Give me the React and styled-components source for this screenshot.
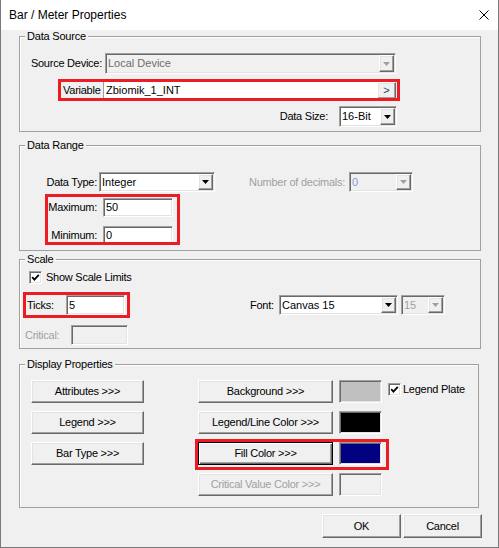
import React from 'react';
import styled, { createGlobalStyle, css } from 'styled-components';

const GlobalStyle = createGlobalStyle`
  * { box-sizing: border-box; }
  html, body { margin: 0; padding: 0; background: #f0f0f0; }
  body {
    font-family: "Liberation Sans", Arial, sans-serif;
    font-size: 11px;
    line-height: 13px;
    color: #000;
  }
`;

const sunken = css`
  border: 1px solid;
  border-color: #a0a0a0 #fff #fff #a0a0a0;
  box-shadow: inset 1px 1px 0 #696969, inset -1px -1px 0 #e3e3e3;
`;

const raised = css`
  border: 1px solid;
  border-color: #fff #696969 #696969 #fff;
  box-shadow: inset -1px -1px 0 #a0a0a0, inset 1px 1px 0 #e3e3e3;
`;

const Window = styled.div`
  width: 499px;
  height: 548px;
  display: flex;
  flex-direction: column;
  background: #f0f0f0;
  border: 1px solid #7a7a7a;
  border-top: none;
  overflow: hidden;
`;

const TitleBar = styled.div`
  height: 30px;
  flex-shrink: 0;
  display: flex;
  align-items: center;
  justify-content: space-between;
  padding: 0 9px 0 8px;
  background: #fff;
  font-size: 12px;
`;

const Body = styled.div`
  display: flex;
  flex-direction: column;
  align-items: flex-start;
  padding-left: 18px;
`;

const Group = styled.fieldset`
  display: block;
  margin: ${p => p.$top || 0}px 0 0;
  padding: 0;
  min-width: 0;
  width: ${p => p.$w}px;
  height: ${p => p.$h}px;
  border: 1px solid #a0a0a0;
  box-shadow: inset 1px 1px 0 #fff;
`;

const GroupTitle = styled.legend`
  margin-left: 5px;
  padding: 0 2px;
  line-height: 13px;
  background: #f0f0f0;
  letter-spacing: -0.2px;
`;

const Row = styled.div`
  display: flex;
  align-items: ${p => p.$top ? 'flex-start' : 'center'};
  justify-content: ${p => p.$end ? 'flex-end' : 'flex-start'};
  gap: ${p => p.$gap || 0}px;
  margin: ${p => p.$mt || 0}px ${p => p.$mr || 0}px 0 ${p => p.$ml || 0}px;
`;

const Column = styled.div`
  display: flex;
  flex-direction: column;
  align-items: flex-start;
  gap: ${p => p.$gap || 0}px;
`;

const Highlight = styled.div`
  position: relative;
  width: max-content;
  display: flex;
  flex-direction: ${p => p.$col ? 'column' : 'row'};
  align-items: ${p => p.$col ? 'flex-start' : 'center'};
  gap: ${p => p.$gap || 0}px;
  margin: ${p => p.$mt || 0}px 0 0 ${p => p.$ml || 0}px;

  &::after {
    content: '';
    position: absolute;
    inset: ${p => p.$o};
    border: 3px solid #ed1c24;
    pointer-events: none;
  }
`;

const Label = styled.span`
  flex-shrink: 0;
  width: ${p => p.$w ? `${p.$w}px` : 'auto'};
  text-align: ${p => p.$right ? 'right' : 'left'};
  color: ${p => p.$off ? '#a0a0a0' : '#000'};
  letter-spacing: -0.25px;
  white-space: nowrap;
`;

const TextBox = styled.div`
  ${sunken};
  width: ${p => p.$w}px;
  height: ${p => p.$h || 20}px;
  flex-shrink: 0;
  display: flex;
  align-items: center;
  padding-left: 2px;
  background: ${p => p.$off ? '#f0f0f0' : '#fff'};
  white-space: nowrap;
  overflow: hidden;
`;

const VarField = styled.div`
  width: 274px;
  height: 17px;
  display: flex;
  align-items: center;
  padding-left: 2px;
  background: #fff;
  border-left: 1px solid #a0a0a0;
`;

const SmallButton = styled.div`
  ${raised};
  width: 19px;
  height: 17px;
  display: flex;
  align-items: center;
  justify-content: center;
  background: #f0f0f0;
  color: #2a3f66;
`;

const ComboFrame = styled.div`
  ${sunken};
  width: ${p => p.$w}px;
  height: ${p => p.$h}px;
  flex-shrink: 0;
  display: flex;
  padding: 1px;
  background: ${p => p.$off ? '#f0f0f0' : '#fff'};
`;

const ComboValue = styled.span`
  flex: 1;
  display: flex;
  align-items: center;
  padding-left: 1px;
  color: ${p => p.$color || '#000'};
  white-space: nowrap;
  overflow: hidden;
`;

const DropButton = styled.span`
  ${raised};
  width: 15px;
  display: flex;
  align-items: center;
  justify-content: center;
  background: #f0f0f0;
`;

const PushButton = styled.button`
  ${raised};
  width: ${p => p.$w}px;
  height: ${p => p.$h || 23}px;
  flex-shrink: 0;
  padding: 0;
  font: inherit;
  letter-spacing: -0.25px;
  color: #000;
  background: #f0f0f0;

  ${p => p.$default && css`
    border-color: #000;
    box-shadow: inset 1px 1px 0 #fff, inset -1px -1px 0 #696969, inset -2px -2px 0 #a0a0a0;
  `}

  &:disabled {
    color: #a0a0a0;
  }
`;

const Swatch = styled.div`
  ${sunken};
  width: 43px;
  height: 23px;
  flex-shrink: 0;
  background: ${p => p.$color || '#f0f0f0'};
`;

const CheckBoxFrame = styled.span`
  ${sunken};
  width: 13px;
  height: 13px;
  flex-shrink: 0;
  display: flex;
  align-items: center;
  justify-content: center;
  background: #fff;
`;

const Footer = styled.div`
  display: flex;
  gap: 2px;
  margin-top: 6px;
  padding-left: 303px;
`;

const CloseIcon = () => (
  <svg width="10" height="10" viewBox="0 0 10 10">
    <path d="M0.5 0.5 L9.5 9.5 M9.5 0.5 L0.5 9.5" stroke="#000" strokeWidth="1" fill="none" />
  </svg>
);

const DropArrow = ({ off }) => (
  <svg width="7" height="4" viewBox="0 0 7 4">
    <polygon points="0,0 7,0 3.5,4" fill={off ? '#a0a0a0' : '#000'} />
  </svg>
);

const ComboBox = ({ w, h = 21, off, color, children }) => (
  <ComboFrame $w={w} $h={h} $off={off}>
    <ComboValue $color={color}>{children}</ComboValue>
    <DropButton><DropArrow off={off} /></DropButton>
  </ComboFrame>
);

const CheckBox = () => (
  <CheckBoxFrame>
    <svg width="9" height="9" viewBox="0 0 9 9">
      <polyline points="1.2,4.2 3.4,6.6 7.8,1.8" stroke="#000" strokeWidth="1.8" fill="none" />
    </svg>
  </CheckBoxFrame>
);

export default function App() {
  return (
    <>
      <GlobalStyle />
      <Window>
        <TitleBar>
          <span>Bar / Meter Properties</span>
          <CloseIcon />
        </TitleBar>

        <Body>
          <Group $w={462} $h={102}>
            <GroupTitle>Data Source</GroupTitle>
            <Row $mt={10} $gap={3}>
              <Label $w={82} $right>Source Device:</Label>
              <ComboBox w={291} off color="#6d6d6d">Local Device</ComboBox>
            </Row>
            <Highlight $mt={8} $ml={43} $o="-3px -4px -2px -5px">
              <Label $w={40}>Variable</Label>
              <VarField>Zbiomik_1_INT</VarField>
              <SmallButton>&gt;</SmallButton>
            </Highlight>
            <Row $mt={7} $mr={83} $gap={11} $end>
              <Label>Data Size:</Label>
              <ComboBox w={58}>16-Bit</ComboBox>
            </Row>
          </Group>

          <Group $top={7} $w={462} $h={112}>
            <GroupTitle>Data Range</GroupTitle>
            <Row $mt={20} $gap={34}>
              <Row $gap={2}>
                <Label $w={77} $right>Data Type:</Label>
                <ComboBox w={116} h={20}>Integer</ComboBox>
              </Row>
              <Row $gap={6}>
                <Label $w={94} $off>Number of decimals:</Label>
                <ComboBox w={64} h={20} off color="#7f9ccb">0</ComboBox>
              </Row>
            </Row>
            <Highlight $col $mt={6} $ml={28} $gap={9} $o="-4px -7px 0 -3px">
              <Row $gap={6}>
                <Label $w={49} $right>Maximum:</Label>
                <TextBox $w={70} $h={19}>50</TextBox>
              </Row>
              <Row $gap={6}>
                <Label $w={49} $right>Minimum:</Label>
                <TextBox $w={70} $h={19}>0</TextBox>
              </Row>
            </Highlight>
          </Group>

          <Group $top={2} $w={462} $h={96}>
            <GroupTitle>Scale</GroupTitle>
            <Row $mt={5} $ml={9} $gap={4}>
              <CheckBox />
              <Label>Show Scale Limits</Label>
            </Row>
            <Row $mt={11} $ml={7} $gap={125}>
              <Highlight $o="-3px -5px -3px -4px">
                <Label $w={39}>Ticks:</Label>
                <TextBox $w={59}>5</TextBox>
              </Highlight>
              <Row $gap={5}>
                <Label $w={24}>Font:</Label>
                <Row $gap={3}>
                  <ComboBox w={119} h={20}>Canvas 15</ComboBox>
                  <ComboBox w={44} h={20} off color="#a0a0a0">15</ComboBox>
                </Row>
              </Row>
            </Row>
            <Row $mt={10} $ml={5}>
              <Label $w={46} $off>Critical:</Label>
              <TextBox $w={57} $off />
            </Row>
          </Group>

          <Group $top={9} $w={460} $h={150}>
            <GroupTitle>Display Properties</GroupTitle>
            <Row $top $mt={9} $ml={11} $gap={54}>
              <Column $gap={8}>
                <PushButton $w={113}>Attributes &gt;&gt;&gt;</PushButton>
                <PushButton $w={113}>Legend &gt;&gt;&gt;</PushButton>
                <PushButton $w={113}>Bar Type &gt;&gt;&gt;</PushButton>
              </Column>
              <Column $gap={8}>
                <Row $top $gap={6}>
                  <PushButton $w={135}>Background &gt;&gt;&gt;</PushButton>
                  <Swatch $color="#c0c0c0" />
                  <Row $mt={3} $gap={2}>
                    <CheckBox />
                    <Label>Legend Plate</Label>
                  </Row>
                </Row>
                <Row $gap={6}>
                  <PushButton $w={135}>Legend/Line Color &gt;&gt;&gt;</PushButton>
                  <Swatch $color="#000" />
                </Row>
                <Highlight $gap={6} $o="-3px -7px -5px -3px">
                  <PushButton $w={135} $default>Fill Color &gt;&gt;&gt;</PushButton>
                  <Swatch $color="#000080" />
                </Highlight>
                <Row $gap={6}>
                  <PushButton $w={135} disabled>Critical Value Color &gt;&gt;&gt;</PushButton>
                  <Swatch />
                </Row>
              </Column>
            </Row>
          </Group>

          <Footer>
            <PushButton $w={79} $h={24}>OK</PushButton>
            <PushButton $w={79} $h={24}>Cancel</PushButton>
          </Footer>
        </Body>
      </Window>
    </>
  );
}
